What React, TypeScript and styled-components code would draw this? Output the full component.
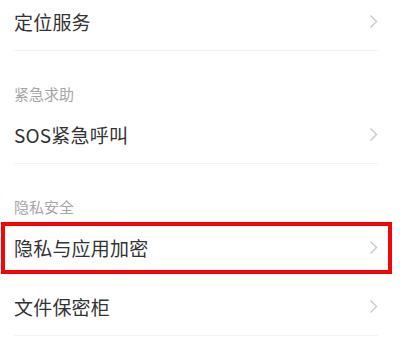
import styled, { createGlobalStyle } from "styled-components";

const GlobalStyle = createGlobalStyle`
  html, body {
    margin: 0;
    padding: 0;
    background: #ffffff;
    overflow: hidden;
  }
  body {
    font-family: 'Noto Sans CJK SC', 'Noto Sans', sans-serif;
  }
`;

const Page = styled.div`
  width: 400px;
  height: 350px;
  overflow: hidden;
  background: #ffffff;
`;

const List = styled.div`
  display: flex;
  flex-direction: column;
  margin-top: -8px;
`;

const Row = styled.div<{ $divider?: boolean }>`
  position: relative;
  height: 59px;
  flex-shrink: 0;
  margin: 0 22px 0 14px;
  display: flex;
  align-items: center;
  justify-content: space-between;
  box-sizing: border-box;
  border-bottom: ${props => props.$divider ? '1px solid #f2f2f2' : '1px solid transparent'};
`;

const Label = styled.span`
  font-size: 19px;
  color: #333333;
  letter-spacing: 0.2px;
  line-height: 1;
`;

const Section = styled.div`
  height: 54px;
  flex-shrink: 0;
  display: flex;
  align-items: flex-end;
  padding: 0 0 4px 14px;
  box-sizing: border-box;
  font-size: 15px;
  color: #a6a6a6;
  line-height: 1;
`;

const Highlight = styled.div`
  position: absolute;
  left: -13px;
  right: -14px;
  top: 4px;
  bottom: 2px;
  border: 4px solid #f50505;
  pointer-events: none;
`;

function Chevron() {
  return (
    <svg width="9" height="15" viewBox="0 0 9 15">
      <path d="M1.5 1.5 L7.5 7.5 L1.5 13.5" fill="none" stroke="#c8c8c8" strokeWidth="1.4" />
    </svg>
  );
}

interface IItemProps {
  label: string;
  divider?: boolean;
  marked?: boolean;
}

function Item({ label, divider, marked }: IItemProps) {
  return (
    <Row $divider={divider}>
      <Label>{label}</Label>
      <Chevron />
      {marked && <Highlight />}
    </Row>
  );
}

export default function App() {
  return (
    <Page>
      <GlobalStyle />
      <List>
        <Item label="定位服务" divider />
        <Section>紧急求助</Section>
        <Item label="SOS紧急呼叫" divider />
        <Section>隐私安全</Section>
        <Item label="隐私与应用加密" marked />
        <Item label="文件保密柜" divider />
        <Item label="防恶意截屏录屏" />
      </List>
    </Page>
  );
}
